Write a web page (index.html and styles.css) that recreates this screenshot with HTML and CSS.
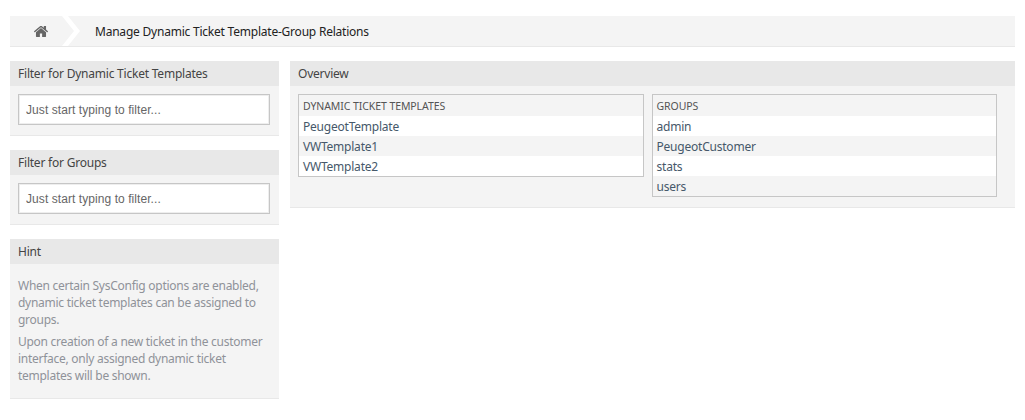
FILE: index.html
```html
<!DOCTYPE html>
<html lang="en">
<head>
<meta charset="utf-8">
<title>Manage Dynamic Ticket Template-Group Relations</title>
<link rel="stylesheet" href="styles.css">
</head>
<body>
<nav class="crumbs">
  <a class="crumb-home" href="#" aria-label="Home">
    <svg class="home-icon" viewBox="96 288 1600 1248" width="14" height="11"><path d="M1472 992v480q0 26-19 45t-45 19h-384v-384h-256v384h-384q-26 0-45-19t-19-45v-480q0-1 .5-3t.5-3l575-474 575 474q1 2 1 6zm223-69l-62 74q-8 9-21 11h-3q-13 0-21-7l-692-577-692 577q-12 8-24 7-13-2-21-11l-62-74q-8-10-7-23.500t11-21.500l719-599q32-26 76-26t76 26l244 204v-195q0-14 9-23t23-9h192q14 0 23 9t9 23v408l219 182q10 8 11 21.500t-7 23.500z"/></svg>
    <svg class="chevron" viewBox="0 0 18 30" width="18" height="30"><path d="M0 0h6l12 15L6 30H0l12-15z"/></svg>
  </a>
  <span class="crumb-title">Manage Dynamic Ticket Template-Group Relations</span>
</nav>
<div class="layout">
  <aside class="sidebar">
    <section class="widget">
      <h2 class="widget-head">Filter for Dynamic Ticket Templates</h2>
      <div class="widget-body filter-body"><input class="filter" type="text" placeholder="Just start typing to filter..."></div>
    </section>
    <section class="widget">
      <h2 class="widget-head">Filter for Groups</h2>
      <div class="widget-body filter-body"><input class="filter" type="text" placeholder="Just start typing to filter..."></div>
    </section>
    <section class="widget">
      <h2 class="widget-head">Hint</h2>
      <div class="widget-body hint">
        <p>When certain SysConfig options are enabled, dynamic ticket templates can be assigned to groups.</p>
        <p>Upon creation of a new ticket in the customer interface, only assigned dynamic ticket templates will be shown.</p>
      </div>
    </section>
  </aside>
  <main class="main">
    <section class="widget">
      <h2 class="widget-head">Overview</h2>
      <div class="widget-body columns">
        <ul class="list">
          <li class="list-head">Dynamic Ticket Templates</li>
          <li><a href="#">PeugeotTemplate</a></li>
          <li><a href="#">VWTemplate1</a></li>
          <li><a href="#">VWTemplate2</a></li>
        </ul>
        <ul class="list">
          <li class="list-head">Groups</li>
          <li><a href="#">admin</a></li>
          <li><a href="#">PeugeotCustomer</a></li>
          <li><a href="#">stats</a></li>
          <li><a href="#">users</a></li>
        </ul>
      </div>
    </section>
  </main>
</div>
</body>
</html>
```
FILE: styles.css
```css
* { box-sizing: border-box; }
html, body { margin: 0; background: #fff; }
body {
  padding: 16px 10px 0;
  font-family: "Noto Sans", "Open Sans", sans-serif;
  font-size: 12px;
  letter-spacing: -0.22px;
  color: #444;
}
a { color: inherit; text-decoration: none; }
.crumbs {
  display: flex;
  align-items: center;
  height: 31px;
  background: #f4f4f4;
  border-bottom: 1px solid #e8e8e8;
}
.crumb-home {
  display: flex;
  align-self: stretch;
  align-items: center;
  width: 85px;
  padding-left: 24px;
  gap: 14px;
}
.home-icon { fill: #666; flex: none; }
.chevron { fill: #fff; flex: none; }
.crumb-title { color: #222; }
.layout {
  display: flex;
  align-items: flex-start;
  gap: 11px;
  margin-top: 14px;
}
.sidebar {
  width: 269px;
  flex: none;
  display: flex;
  flex-direction: column;
  gap: 14px;
}
.main { flex: 1; }
.widget {
  background: #f4f4f4;
  border-bottom: 1px solid #e8e8e8;
}
.widget-head {
  margin: 0;
  height: 25px;
  padding: 0 8px;
  line-height: 25px;
  font-size: 12px;
  font-weight: 400;
  background: #e8e8e8;
  color: #444;
}
.widget-body { padding: 8px; }
.filter-body { padding: 8px 9px 10px 8px; }
.filter {
  display: block;
  width: 100%;
  height: 31px;
  padding: 0 7px;
  border: 1px solid #c6c6c6;
  border-radius: 0;
  background: #fff;
  box-shadow: inset 0 0 0 1px #eee;
  outline: none;
  font-family: "Liberation Sans", Arial, sans-serif;
  font-size: 12px;
  letter-spacing: 0.07px;
  color: #666;
}
.filter::placeholder { color: #666; opacity: 1; }
.hint { padding: 13px 8px 14px; color: #8f9299; line-height: 17px; letter-spacing: -0.27px; }
.hint p { margin: 0 0 5px; }
.hint p:last-child { margin-bottom: 0; }
.columns {
  display: flex;
  align-items: flex-start;
  gap: 8px;
  padding: 8px 18px 10px 8px;
}
.list {
  flex: 1;
  min-width: 0;
  margin: 0;
  padding: 0;
  list-style: none;
  border: 1px solid #c6c6c6;
  background: #fff;
}
.list li {
  height: 20px;
  padding: 1px 4px 0;
  line-height: 20px;
  color: #46586a;
}
.list li:nth-child(odd) { background: #f4f4f4; }
.list .list-head {
  height: 21px;
  line-height: 21px;
  font-size: 10.5px;
  letter-spacing: -0.08px;
  text-transform: uppercase;
  color: #555;
  background: #ededed;
}
```
